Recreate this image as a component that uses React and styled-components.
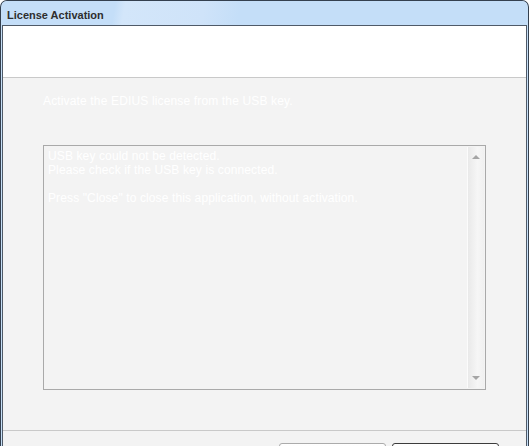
import React from "react";
import styled, { createGlobalStyle } from "styled-components";

const GlobalStyle = createGlobalStyle`
  html, body {
    margin: 0;
    padding: 0;
    background: #ffffff;
    overflow: hidden;
  }
`;

const LicenseActivation = () => {
    return (
        <>
            <GlobalStyle />
            <Window>
                <TitleBar>License Activation</TitleBar>
                <Content>
                    <Header />
                    <Body>
                        <Instruction>Activate the EDIUS license from the USB key.</Instruction>
                        <MessageBox>
                            <MessageText>
                                <Line>USB key could not be detected.</Line>
                                <Line>Please check if the USB key is connected.</Line>
                                <Line>&nbsp;</Line>
                                <Line>Press "Close" to close this application, without activation.</Line>
                            </MessageText>
                            <ScrollBar>
                                <Arrow $dir="up" />
                                <Arrow $dir="down" />
                            </ScrollBar>
                        </MessageBox>
                    </Body>
                    <Footer>
                        <DialogButton aria-label="Activate" />
                        <DialogButton aria-label="Close" $default />
                    </Footer>
                </Content>
            </Window>
        </>
    );
};

const Window = styled.div`
  width: 529px;
  height: 480px;
  box-sizing: border-box;
  border: 1px solid #34404f;
  border-bottom: none;
  border-radius: 7px 7px 0 0;
  background: #c6dff7;
  padding: 0 1px;
  display: flex;
  flex-direction: column;
  overflow: hidden;
`;

const TitleBar = styled.div`
  height: 24px;
  flex: none;
  box-sizing: border-box;
  padding: 3px 0 0 5px;
  display: flex;
  align-items: center;
  background: linear-gradient(100deg, #c4def8 0 112px, #d3e6fa 122px, #cfe3f9 200px, #c4def8 236px);
  color: #2e2e2e;
  font: 700 11px "Liberation Sans", Arial, sans-serif;
`;

const Content = styled.div`
  flex: 1;
  display: flex;
  flex-direction: column;
  background: #f3f3f3;
  border: 1px solid #4f5a68;
  border-bottom: none;
`;

const Header = styled.div`
  height: 51px;
  flex: none;
  background: #ffffff;
  border-bottom: 1px solid #c9c9c9;
`;

const Body = styled.div`
  padding: 16px 0 40px 40px;
  display: flex;
  flex-direction: column;
`;

const Instruction = styled.div`
  color: #ffffff;
  font: 400 12px/14px "Liberation Sans Narrow", "Liberation Sans", Arial, sans-serif;
  letter-spacing: 0.15px;
  margin-bottom: 37px;
`;

const MessageBox = styled.div`
  width: 443px;
  height: 245px;
  box-sizing: border-box;
  border: 1px solid #a9a9a9;
  display: flex;
  background: #f3f3f3;
`;

const MessageText = styled.div`
  flex: 1;
  padding: 3px 0 0 4px;
  color: #ffffff;
  font: 400 12px/14px "Liberation Sans Narrow", "Liberation Sans", Arial, sans-serif;
  letter-spacing: 0.12px;
`;

const Line = styled.div``;

const ScrollBar = styled.div`
  width: 16px;
  margin: 1px 1px 1px 0;
  border-left: 1px solid #fbfbfb;
  background: linear-gradient(90deg, #e9e9e9, #f6f6f6 60%, #f0f0f0);
  display: flex;
  flex-direction: column;
  justify-content: space-between;
  align-items: center;
  padding: 8px 0 8px;
`;

const Arrow = styled.div`
  width: 0;
  height: 0;
  border-left: 4px solid transparent;
  border-right: 4px solid transparent;
  ${p => p.$dir === "up"
    ? "border-bottom: 4px solid #a5a5a5;"
    : "border-top: 4px solid #a5a5a5;"}
`;

const Footer = styled.div`
  border-top: 1px solid #c9c9c9;
  padding: 12px 27px 0 0;
  display: flex;
  justify-content: flex-end;
  gap: 6px;
`;

const DialogButton = styled.button`
  width: 107px;
  height: 23px;
  border-radius: 3px;
  border: 1px solid ${p => (p.$default ? "#3c3c3c" : "#ababab")};
  background: linear-gradient(#ffffff, #ececec);
  padding: 0;
`;

export default LicenseActivation;
